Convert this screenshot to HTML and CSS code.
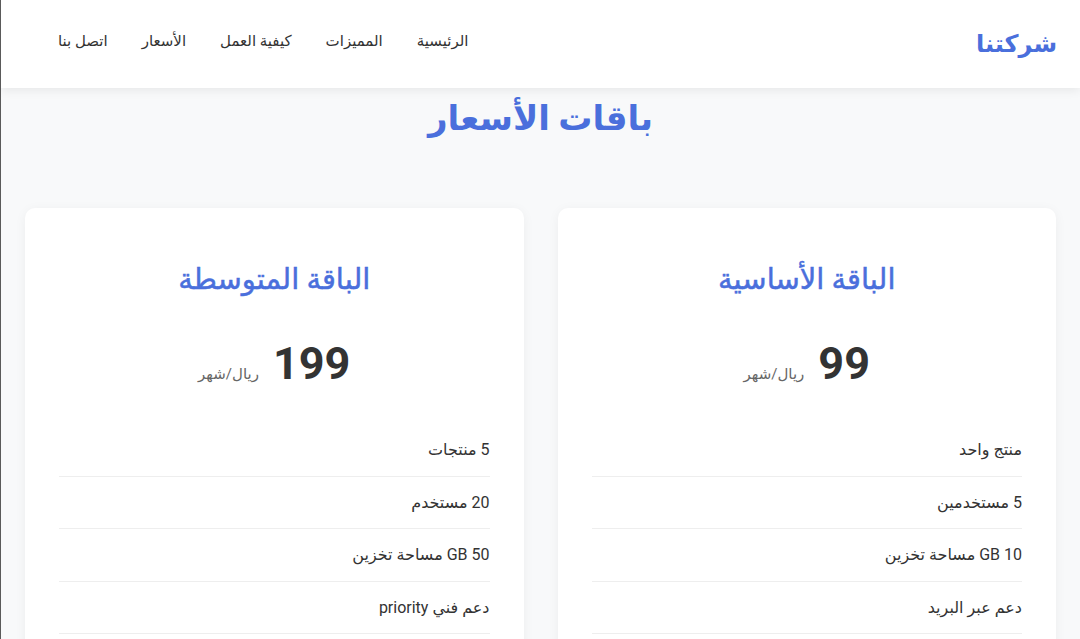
FILE: index.html
```
<!DOCTYPE html>
<html lang="ar" dir="rtl">
<head>
    <meta charset="UTF-8">
    <meta name="viewport" content="width=device-width, initial-scale=1.0">
    <title>شركتنا - باقات الأسعار</title>
    <link rel="stylesheet" href="styles.css">
</head>
<body>

<header class="site-header">
    <div class="logo">شركتنا</div>
    <nav class="main-nav">
        <a href="#home">الرئيسية</a>
        <a href="#features">المميزات</a>
        <a href="#how">كيفية العمل</a>
        <a href="#pricing">الأسعار</a>
        <a href="#contact">اتصل بنا</a>
    </nav>
</header>

<section class="pricing" id="pricing">
    <h2 class="section-title">باقات الأسعار</h2>

    <div class="plans">
        <div class="plan">
            <h3 class="plan-name">الباقة الأساسية</h3>
            <div class="plan-price">99 <span>ريال/شهر</span></div>
            <ul class="plan-features">
                <li>منتج واحد</li>
                <li>5 مستخدمين</li>
                <li>10 GB مساحة تخزين</li>
                <li>دعم عبر البريد</li>
                <li>تقارير أساسية</li>
            </ul>
        </div>

        <div class="plan">
            <h3 class="plan-name">الباقة المتوسطة</h3>
            <div class="plan-price">199 <span>ريال/شهر</span></div>
            <ul class="plan-features">
                <li>5 منتجات</li>
                <li>20 مستخدم</li>
                <li>50 GB مساحة تخزين</li>
                <li>دعم فني priority</li>
                <li>تقارير متقدمة</li>
            </ul>
        </div>
    </div>
</section>

</body>
</html>
```

FILE: styles.css
```
html {
    border-left: 1px solid #5a5a5a; /* window edge */
}
body {
    margin: 0;
    font-family: "Segoe UI", Roboto, "DejaVu Sans", sans-serif;
    background-color: #f8f9fa; /* Light gray background */
    color: #333333;
}
a {
    text-decoration: none;
    color: inherit;
}

/* Header */
.site-header {
    height: 88px;
    display: flex;
    align-items: center;
    justify-content: space-between;
    padding: 0 23px 0 57px;
    background-color: #ffffff;
    box-shadow: 0 2px 10px rgba(0, 0, 0, 0.08);
    position: relative;
    z-index: 2;
}
.logo {
    font-size: 24px;
    font-weight: bold;
    color: #4a6fdc; /* Brand blue */
}
.main-nav {
    display: flex;
    gap: 34px;
    padding-bottom: 6px;
}
.main-nav a {
    font-size: 15px;
    color: #333333;
}

/* Pricing */
.pricing {
    padding: 8px 24px 40px;
}
.section-title {
    margin: 0 0 68px;
    text-align: center;
    font-size: 34px;
    line-height: 44px;
    color: #4a6fdc;
}
.plans {
    display: grid;
    grid-template-columns: 1fr 1fr;
    gap: 34px;
}
.plan {
    background-color: #ffffff;
    border-radius: 10px;
    box-shadow: 0 2px 12px rgba(0, 0, 0, 0.05);
    padding: 50px 34px 20px;
}
.plan-name {
    margin: 0;
    text-align: center;
    font-size: 29px;
    font-weight: normal;
    line-height: 42px;
    color: #4a6fdc;
    -webkit-text-stroke: 0.5px #4a6fdc;
}
.plan-price {
    display: flex;
    justify-content: center;
    align-items: baseline;
    gap: 14px;
    margin: 38px 0 34px;
    font-size: 45px;
    line-height: 52px;
    font-weight: bold;
    color: #333333;
}
.plan-price span {
    font-size: 15px;
    line-height: 20px;
    font-weight: normal;
    color: #666666;
}
.plan-features {
    list-style: none;
    margin: 0;
    padding: 0;
}
.plan-features li {
    padding: 15px 0;
    line-height: 21.5px;
    font-size: 16px;
    color: #333333;
    border-bottom: 1px solid #eeeeee;
}
```
